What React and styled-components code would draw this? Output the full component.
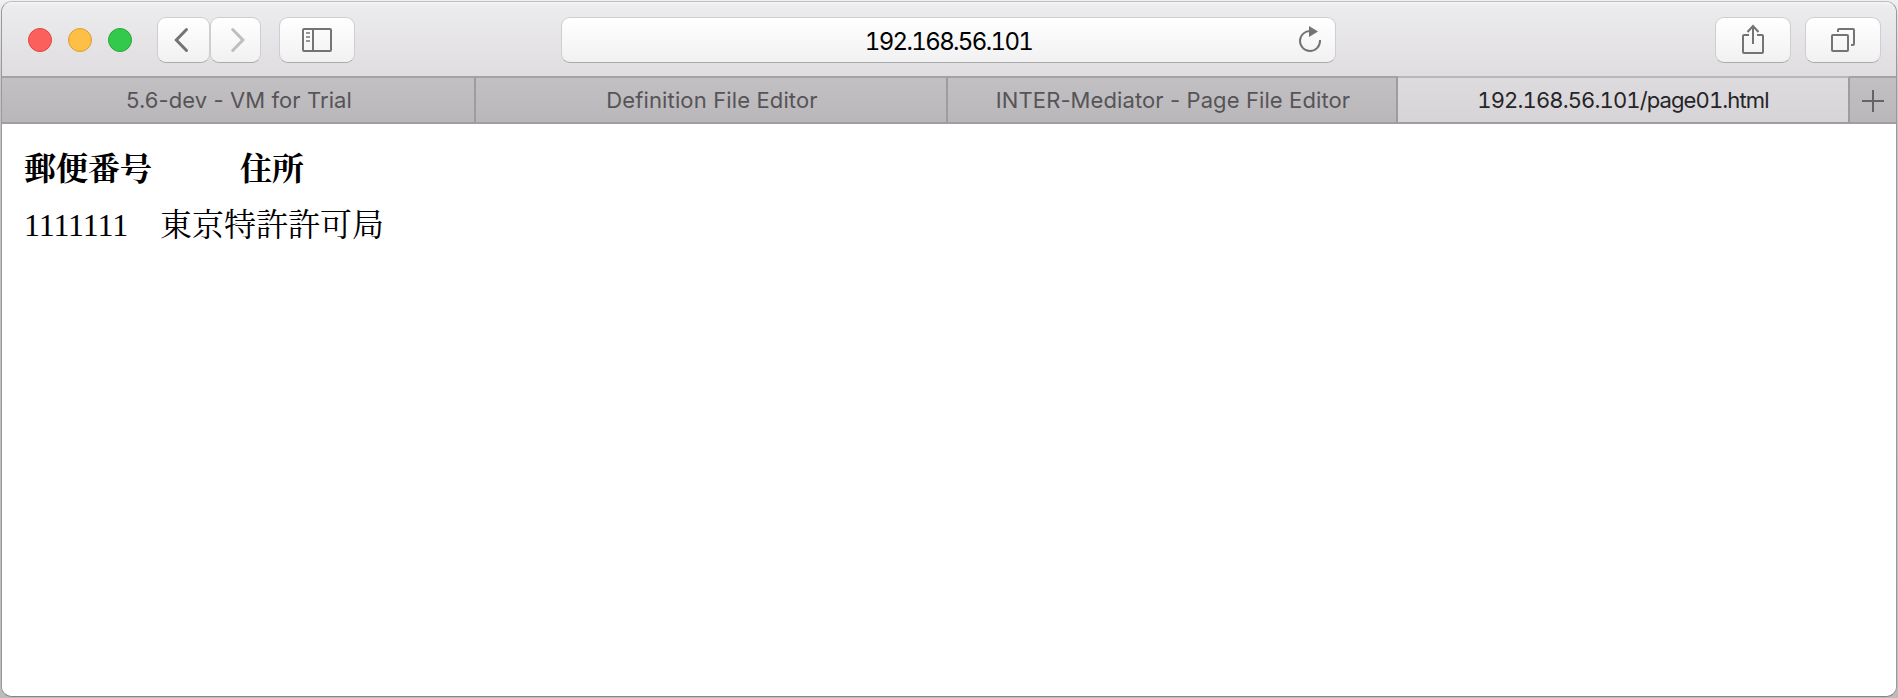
import React from "react";
import styled, { createGlobalStyle } from "styled-components";

const GlobalStyle = createGlobalStyle`
  * { box-sizing: border-box; }
  html, body { margin: 0; padding: 0; }
  body { background: #fff; overflow: hidden; }
`;

const Desktop = styled.div`
  width: 1898px;
  height: 698px;
  padding: 1px 1px;
  background: linear-gradient(#f0f0f0 0, #c4c4c4 90px, #bcbcbc 100%);
`;

const Window = styled.div`
  display: flex;
  flex-direction: column;
  height: 696px;
  border: 1px solid #999;
  border-top-color: #bcbcbc;
  border-bottom-color: #868686;
  border-radius: 11px;
  background: #fff;
  overflow: hidden;
`;

const Toolbar = styled.header`
  display: flex;
  align-items: flex-start;
  flex: 0 0 74px;
  padding: 15px 15px 0 26px;
  background: linear-gradient(#f6f5f6 0, #ecebed 4px, #dfdde0 100%);
`;

const Lights = styled.div`
  display: flex;
  gap: 16px;
  margin: 11px 25px 0 0;
`;

const Light = styled.span`
  width: 24px;
  height: 24px;
  border-radius: 50%;
  border: 1px solid ${(p) => p.$edge};
  background: ${(p) => p.$fill};
`;

const Button = styled.button`
  display: flex;
  align-items: center;
  justify-content: center;
  width: ${(p) => p.$width}px;
  height: 46px;
  margin: 0 0 0 ${(p) => p.$gap || 0}px;
  padding: 0;
  border: 1px solid #cfcdd0;
  border-bottom-color: #acaaad;
  border-radius: 9px;
  background: linear-gradient(#fff, #f1f1f1);
`;

const AddressBar = styled.div`
  display: flex;
  align-items: center;
  width: 775px;
  height: 46px;
  margin: 0 379px 0 206px;
  padding: 0 13px;
  border: 1px solid #cfcdd0;
  border-bottom-color: #a9aaa9;
  border-radius: 9px;
  background: linear-gradient(#fff, #f1f1f1);
`;

const Address = styled.span`
  flex: 1;
  padding: 3px 0 0 24px;
  color: #000;
  font: 24px/28px Inter, "Liberation Sans", sans-serif;
  font-variant-numeric: tabular-nums;
  letter-spacing: -1.65px;
  text-align: center;
`;

const TabBar = styled.nav`
  display: grid;
  grid-template-columns: 474px 472px 450px 452px 46px;
  flex: 0 0 48px;
`;

const Tab = styled.div`
  display: flex;
  align-items: center;
  justify-content: center;
  padding: ${(p) => (p.$last ? "2px 0 0" : p.$active ? "0 0 1px" : "0 0 1px 2px")};
  border-right: ${(p) => (p.$last ? 0 : 2)}px solid #9e9c9f;
  border-top: 2px solid ${(p) => (p.$active ? "#b9b7ba" : "#a4a2a5")};
  border-bottom: 2px solid #a09ea1;
  background: ${(p) => (p.$active ? "linear-gradient(#dddbde, #d6d4d7)" : "linear-gradient(#c2c0c3, #b9b7ba)")};
  color: ${(p) => (p.$active ? "#262527" : "#565457")};
  font: 22px/28px Inter, "Liberation Sans", sans-serif;
  font-variant-numeric: ${(p) => (p.$active ? "tabular-nums" : "normal")};
  letter-spacing: ${(p) => p.$tracking || 0}px;
  white-space: pre;
`;

const Page = styled.main`
  flex: 1;
  padding: 15px 16px 0 16px;
  background: #fff;
`;

const Table = styled.table`
  border-collapse: separate;
  border-spacing: 4px;
  color: #000;
  font: 32px/48px "Liberation Serif", "Noto Serif CJK JP", "Noto Sans CJK JP", serif;

  th, td { padding: 2px; }
  th { font-weight: 700; }
`;

const Digits = styled.td`
  font-kerning: none;
  letter-spacing: -1.3px;
`;

const Icon = ({ width, height, children, color = "#747474", stroke = 2 }) => (
  <svg width={width} height={height} viewBox={`0 0 ${width} ${height}`} fill="none" stroke={color} strokeWidth={stroke}>
    {children}
  </svg>
);

const tabs = [
  { title: "5.6-dev - VM for Trial", tracking: 0.08 },
  { title: "Definition File Editor", tracking: 0.13 },
  { title: "INTER-Mediator - Page File Editor", tracking: 0.1 },
  { title: "192.168.56.101/page01.html", tracking: -0.88, active: true },
];

export default function App() {
  return (
    <Desktop>
      <GlobalStyle />
      <Window>
        <Toolbar>
          <Lights>
            <Light $fill="#fc605c" $edge="#de4644" />
            <Light $fill="#fdbf45" $edge="#dd9f35" />
            <Light $fill="#33c94c" $edge="#26a934" />
          </Lights>
          <Button $width={53} aria-label="Back">
            <Icon width={24} height={28} color="#747474" stroke={3}>
              <path d="M14.500 3.500 4.300 14l10.200 10.500" strokeLinecap="round" />
            </Icon>
          </Button>
          <Button $width={51} aria-label="Forward">
            <Icon width={24} height={28} color="#bebebe" stroke={3}>
              <path d="M8.700 3.500 18.900 14l-10.200 10.500" strokeLinecap="round" />
            </Icon>
          </Button>
          <Button $width={76} $gap={18} aria-label="Sidebar">
            <Icon width={30} height={24}>
              <rect x="1" y="1" width="28" height="22" rx="1" />
              <path d="M11 1v22" />
              <path d="M4 5h4M4 9h4M4 13h4" stroke="#969696" />
            </Icon>
          </Button>
          <AddressBar>
            <Address>192.168.56.101</Address>
            <Icon width={24} height={30}>
              <path d="M12.5 6A10 10 0 1 0 22 16v-1" />
              <path d="M11 1v11l9-5.5z" fill="#747474" stroke="none" />
            </Icon>
          </AddressBar>
          <Button $width={76} aria-label="Share">
            <Icon width={24} height={32}>
              <path d="M8 11H3q-1 0-1 1v16q0 1 1 1h18q1 0 1-1V12q0-1-1-1h-5" />
              <path d="M12 20V2M6.5 8 12 2l5.500 6" />
            </Icon>
          </Button>
          <Button $width={76} $gap={14} aria-label="Tabs">
            <Icon width={24} height={24}>
              <rect x="1" y="7" width="16" height="16" rx="1" />
              <path d="M7 4V2q0-1 1-1h14q1 0 1 1v14q0 1-1 1h-2" />
            </Icon>
          </Button>
        </Toolbar>
        <TabBar>
          {tabs.map((tab) => (
            <Tab key={tab.title} $active={tab.active} $tracking={tab.tracking}>
              {tab.title}
            </Tab>
          ))}
          <Tab $last>
            <Icon width={22} height={22} color="#656366">
              <path d="M11 0v22M0 11h22" />
            </Icon>
          </Tab>
        </TabBar>
        <Page>
          <Table>
            <thead>
              <tr>
                <th>郵便番号</th>
                <th>住所</th>
              </tr>
            </thead>
            <tbody>
              <tr>
                <Digits>1111111</Digits>
                <td>東京特許許可局</td>
              </tr>
            </tbody>
          </Table>
        </Page>
      </Window>
    </Desktop>
  );
}
